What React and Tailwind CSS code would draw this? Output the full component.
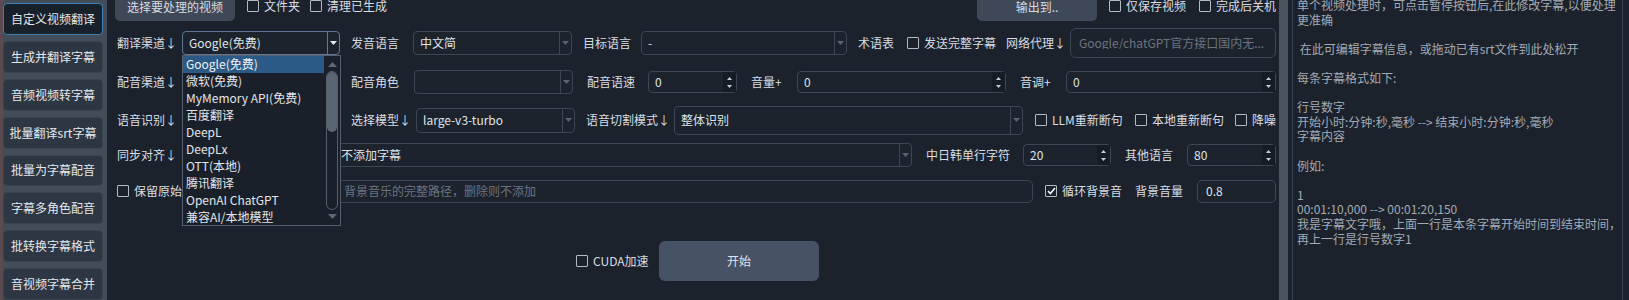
import React from 'react';

const navItems = [
  '自定义视频翻译', '生成并翻译字幕', '音频视频转字幕', '批量翻译srt字幕',
  '批量为字幕配音', '字幕多角色配音', '批转换字幕格式', '音视频字幕合并',
];

const channels = [
  'Google(免费)', '微软(免费)', 'MyMemory API(免费)', '百度翻译', 'DeepL',
  'DeepLx', 'OTT(本地)', '腾讯翻译', 'OpenAI ChatGPT', '兼容AI/本地模型',
];

const helpLines = [
  '单个视频处理时，可点击暂停按钮后,在此修改字幕,以便处理',
  '更准确',
  '',
  ' 在此可编辑字幕信息，或拖动已有srt文件到此处松开',
  '',
  '每条字幕格式如下:',
  '',
  '行号数字',
  '开始小时:分钟:秒,毫秒 --> 结束小时:分钟:秒,毫秒',
  '字幕内容',
  '',
  '例如:',
  '',
  '1',
  '00:01:10,000 --> 00:01:20,150',
  '我是字幕文字哦，上面一行是本条字幕开始时间到结束时间，',
  '再上一行是行号数字1',
];

const Label = ({ className = '', children }) => (
  <span className={`shrink-0 whitespace-nowrap text-[#d9dde3] ${className}`}>{children}</span>
);

const Check = ({ checked, className = '', children }) => (
  <label className={`flex shrink-0 items-center whitespace-nowrap text-[#d9dde3] ${className}`}>
    <span className="mr-[5px] flex h-[12px] w-[12px] shrink-0 items-center justify-center rounded-[1px] border border-[#b4bac2]">
      {checked && (
        <svg width="9" height="8" viewBox="0 0 9 8">
          <path d="M1 4.2 L3.4 6.5 L8 1" fill="none" stroke="#f1f3f5" strokeWidth="1.6" />
        </svg>
      )}
    </span>
    {children}
  </label>
);

const Select = ({ value, open, className = '' }) => (
  <div
    className={`flex shrink-0 items-stretch rounded-[4px] border bg-[#1c232d] ${
      open ? 'border-[#5d7894]' : 'border-[#3d4653]'
    } ${className}`}
  >
    <span className="flex flex-1 items-center truncate px-[6px] text-[#dfe3e8]">{value}</span>
    <span className={`flex w-[12px] items-center justify-center border-l ${open ? 'border-[#5d7894]' : 'border-[#3d4653]'}`}>
      <svg width="7" height="4" viewBox="0 0 7 4">
        <path d="M0 0 H7 L3.5 4 Z" fill={open ? '#e8ebee' : '#5a6370'} />
      </svg>
    </span>
  </div>
);

const Spin = ({ value, className = '' }) => (
  <div className={`flex h-[22px] shrink-0 items-stretch rounded-[4px] border border-[#3d4653] bg-[#1c232d] ${className}`}>
    <span className="flex flex-1 items-center px-[6px] text-[#dfe3e8]">{value}</span>
    <span className="flex w-[13px] flex-col items-center justify-center gap-[5px] bg-[#161c24]">
      <svg width="5" height="3" viewBox="0 0 5 3"><path d="M0 3 H5 L2.5 0 Z" fill="#c9ced4" /></svg>
      <svg width="5" height="3" viewBox="0 0 5 3"><path d="M0 0 H5 L2.5 3 Z" fill="#c9ced4" /></svg>
    </span>
  </div>
);

const Field = ({ value, placeholder, className = '' }) => (
  <div className={`flex shrink-0 items-center truncate rounded-[5px] border border-[#3d4653] bg-[#1c232d] px-[8px] ${className}`}>
    {value ? <span className="text-[#dfe3e8]">{value}</span> : <span className="truncate text-[#6c7480]">{placeholder}</span>}
  </div>
);

export default function App() {
  return (
    <div className="flex h-[300px] w-[1629px] overflow-hidden bg-[#1b222c] font-['Noto_Sans_CJK_SC',sans-serif] text-[12px] leading-none">
      {/* left nav */}
      <aside className="flex w-[107px] shrink-0 bg-[#434d5a]">
        <div className="w-[3px] shrink-0 bg-[#5b4a50]" />
        <nav className="flex w-[100px] flex-col gap-[6px] pt-[3px]">
          {navItems.map((item, i) => (
            <div
              key={item}
              className={`flex h-[32px] items-center justify-center rounded-[4px] border text-[#e4e7eb] ${
                i === 0 ? 'border-[#3f7db3] bg-[#18202a]' : 'border-[#3a4450] bg-[#2d3743]'
              }`}
            >
              {item}
            </div>
          ))}
        </nav>
      </aside>

      {/* main form */}
      <main className="relative flex w-[1172px] shrink-0 flex-col pl-[10px] pr-[3px]">
        <div className="mt-[-9px] flex h-[30px] items-center">
          <div className="ml-[-2px] flex h-[30px] w-[120px] items-center justify-center rounded-[5px] bg-[#3e4856] pt-[1px] text-[#d7dbe0]">
            选择要处理的视频
          </div>
          <Check className="ml-[12px]">文件夹</Check>
          <Check className="ml-[10px]">清理已生成</Check>
          <div className="ml-auto flex h-[30px] w-[120px] items-center justify-center rounded-[5px] bg-[#3e4856] pt-[1px] text-[#d7dbe0]">
            输出到..
          </div>
          <Check className="ml-[12px] w-[90px]">仅保存视频</Check>
          <Check>完成后关机</Check>
        </div>

        <div className="mt-[7px] flex h-[30px] items-center">
          <Label className="w-[65px]">翻译渠道↓</Label>
          <Select value="Google(免费)" open className="h-[24px] w-[158px]" />
          <Label className="ml-[11px] w-[62px]">发音语言</Label>
          <Select value="中文简" className="h-[24px] w-[159px]" />
          <Label className="ml-[11px] w-[58px]">目标语言</Label>
          <Select value="-" className="h-[24px] w-[206px]" />
          <Label className="ml-[11px] w-[49px]">术语表</Label>
          <Check className="w-[99px]">发送完整字幕</Check>
          <Label className="w-[64px]">网络代理↓</Label>
          <Field placeholder="Google/chatGPT官方接口国内无..." className="h-[30px] w-[206px] rounded-[6px]" />
        </div>

        <div className="mt-[9px] flex h-[30px] items-center">
          <Label className="w-[65px]">配音渠道↓</Label>
          <Select value="" className="h-[24px] w-[158px]" />
          <Label className="ml-[11px] w-[63px]">配音角色</Label>
          <Select value="" className="h-[24px] w-[159px]" />
          <Label className="ml-[14px] w-[61px]">配音语速</Label>
          <Spin value="0" className="w-[89px]" />
          <Label className="ml-[14px] w-[46px]">音量+</Label>
          <Spin value="0" className="w-[209px]" />
          <Label className="ml-[14px] w-[46px]">音调+</Label>
          <Spin value="0" className="w-[210px]" />
        </div>

        <div className="mt-[8px] flex h-[30px] items-center">
          <Label className="w-[65px]">语音识别↓</Label>
          <Select value="" className="h-[24px] w-[158px]" />
          <Label className="ml-[11px] w-[65px]">选择模型↓</Label>
          <Select value="large-v3-turbo" className="h-[25px] w-[159px]" />
          <Label className="ml-[11px] w-[88px]">语音切割模式↓</Label>
          <Select value="整体识别" className="h-[29px] w-[349px]" />
          <Check className="ml-[12px] w-[100px]">LLM重新断句</Check>
          <Check className="w-[100px]">本地重新断句</Check>
          <Check>降噪</Check>
        </div>

        <div className="mt-[5px] flex h-[30px] items-center">
          <Label className="w-[65px]">同步对齐↓</Label>
          <Select value="不添加字幕" className="ml-[152px] h-[24px] w-[578px]" />
          <Label className="ml-[14px] w-[97px]">中日韩单行字符</Label>
          <Spin value="20" className="w-[88px]" />
          <Label className="ml-[14px] w-[62px]">其他语言</Label>
          <Spin value="80" className="w-[89px]" />
        </div>

        <div className="mt-[6px] flex h-[30px] items-center">
          <Check className="w-[219px]">保留原始背景音</Check>
          <Field placeholder="背景音乐的完整路径，删除则不添加" className="h-[23px] w-[697px] pl-[7px]" />
          <Check checked className="ml-[12px] w-[90px]">循环背景音</Check>
          <Label className="w-[62px]">背景音量</Label>
          <Field value="0.8" className="h-[23px] w-[79px]" />
        </div>

        <div className="mt-[35px] flex h-[40px] items-center">
          <Check className="ml-[459px] w-[83px]">CUDA加速</Check>
          <div className="flex h-[40px] w-[160px] items-center justify-center rounded-[6px] bg-[#475264] text-[#e2e5e9]">
            开始
          </div>
        </div>

        {/* open dropdown of 翻译渠道 */}
        <div className="absolute left-[75px] top-[55px] flex h-[171px] w-[159px] border border-[#56606c] bg-[#1a2029]">
          <ul className="flex w-[141px] flex-col">
            {channels.map((c, i) => (
              <li
                key={c}
                className={`flex h-[17px] items-center pl-[3px] text-[12px] ${
                  i === 0 ? 'bg-[#2c5a86] text-[#eef1f4]' : 'text-[#e2e5e9]'
                }`}
              >
                {c}
              </li>
            ))}
          </ul>
          <div className="flex w-[16px] flex-col items-center py-[3px]">
            <svg width="9" height="5" viewBox="0 0 9 5" className="mt-[3px]"><path d="M0 5 H9 L4.5 0 Z" fill="#5f6874" /></svg>
            <div className="mt-[4px] flex w-[12px] flex-1 flex-col rounded-[6px] border border-[#56606c]">
              <div className="h-[60px] rounded-[6px] bg-[#5b6572]" />
            </div>
            <svg width="9" height="5" viewBox="0 0 9 5" className="mb-[3px] mt-[4px]"><path d="M0 0 H9 L4.5 5 Z" fill="#5f6874" /></svg>
          </div>
        </div>
      </main>

      {/* splitter */}
      <div className="w-[9px] shrink-0 bg-[#4a5461]" />

      {/* subtitle text area */}
      <section className="flex w-[341px] shrink-0 pl-[4px]">
        <div className="mt-[-1px] h-[302px] w-[331px] overflow-hidden border-x border-[#3a4350] bg-[#1b222c] px-[4px]">
          <div className="mt-[-1px] text-[12px] leading-[14.6px] text-[#a3aab3]">
            {helpLines.map((line, i) => (
              <div key={i} className="h-[14.6px] whitespace-pre">{line}</div>
            ))}
          </div>
        </div>
      </section>
    </div>
  );
}
